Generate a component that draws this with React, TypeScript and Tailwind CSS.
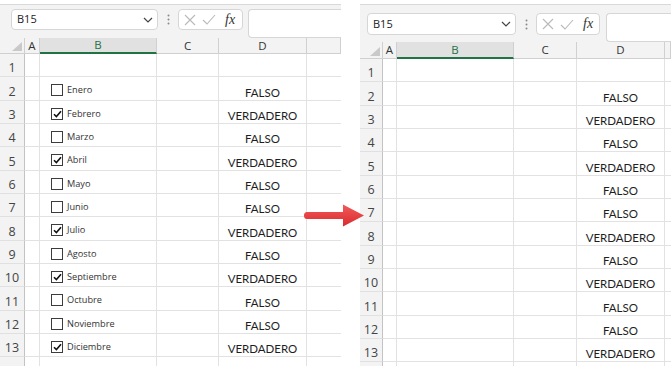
import React from "react";

type Cfg = {
  width: string;
  bar: string;
  nameBox: string;
  dots: string;
  fxBox: string;
  cols: string;
  head: string;
  checks: boolean;
};

const LEFT: Cfg = {
  width: "w-[341px]",
  bar: "h-[34px] pt-[4px] pl-[11px]",
  nameBox: "w-[147px] h-[21px]",
  dots: "w-[20px] h-[21px]",
  fxBox: "w-[65px] h-[21px] mr-[5px]",
  cols: "grid-cols-[25px_15px_117px_62px_88px_1fr]",
  head: "h-[16px]",
  checks: true,
};

const RIGHT: Cfg = {
  width: "w-[311px]",
  bar: "h-[38px] pt-[8px] pl-[7px]",
  nameBox: "w-[149px] h-[22px]",
  dots: "w-[20px] h-[22px]",
  fxBox: "w-[64px] h-[22px] mr-[6px]",
  cols: "grid-cols-[23px_14px_117px_63px_88px_1fr]",
  head: "h-[17px]",
  checks: false,
};

// month, checked
const months: [string, boolean][] = [
  ["Enero", false],
  ["Febrero", true],
  ["Marzo", false],
  ["Abril", true],
  ["Mayo", false],
  ["Junio", false],
  ["Julio", true],
  ["Agosto", false],
  ["Septiembre", true],
  ["Octubre", false],
  ["Noviembre", false],
  ["Diciembre", true],
];

const CheckBox = ({ checked }: { checked: boolean }) => (
  <span className="flex h-[12px] w-[12px] shrink-0 items-center justify-center border border-[#3c3c3c] bg-white">
    {checked && (
      <svg width="9" height="8" viewBox="0 0 9 8">
        <path d="M1 4.2 L3.4 6.6 L8 1.2" fill="none" stroke="#111" strokeWidth="1.6" />
      </svg>
    )}
  </span>
);

const Toolbar = ({ cfg }: { cfg: Cfg }) => (
  <div className={`flex shrink-0 items-start border-t border-[#d9d9d9] bg-[#f3f3f3] ${cfg.bar}`}>
    <div
      className={`flex items-center justify-between rounded-[4px] border border-[#d6d6d6] bg-white pl-[5px] pr-[4px] ${cfg.nameBox}`}
    >
      <span className="font-['Open_Sans',sans-serif] text-[11px] text-[#222]">B15</span>
      <svg width="10" height="6" viewBox="0 0 10 6">
        <path d="M1 1 L5 5 L9 1" fill="none" stroke="#444" strokeWidth="1.2" />
      </svg>
    </div>
    <div className={`flex items-center justify-center ${cfg.dots}`}>
      <svg width="3" height="11" viewBox="0 0 3 11">
        <circle cx="1.5" cy="1.5" r="1" fill="#8a8a8a" />
        <circle cx="1.5" cy="5.5" r="1" fill="#8a8a8a" />
        <circle cx="1.5" cy="9.5" r="1" fill="#8a8a8a" />
      </svg>
    </div>
    <div
      className={`flex items-center gap-[6px] rounded-[4px] border border-[#d6d6d6] bg-white pl-[5px] ${cfg.fxBox}`}
    >
      <svg width="12" height="12" viewBox="0 0 12 12">
        <path d="M1 1 L11 11 M11 1 L1 11" stroke="#b9b9b9" strokeWidth="1.1" />
      </svg>
      <svg width="14" height="11" viewBox="0 0 14 11">
        <path d="M1 6 L5 10 L13 1" fill="none" stroke="#b9b9b9" strokeWidth="1.1" />
      </svg>
      <span className="ml-[3px] font-['Liberation_Serif',serif] text-[14px] italic leading-none text-[#333]">
        fx
      </span>
    </div>
    <div className="h-full flex-1 rounded-l-[4px] border border-r-0 border-[#d6d6d6] bg-white" />
  </div>
);

const Panel = ({ cfg }: { cfg: Cfg }) => {
  const letters = ["A", "B", "C", "D", ""];
  const rows = Array.from({ length: 14 }, (_, i) => i + 1);
  return (
    <div className={`flex h-[366px] shrink-0 flex-col overflow-hidden pt-[4px] ${cfg.width}`}>
      <Toolbar cfg={cfg} />
      <div className={`grid shrink-0 ${cfg.cols} font-['Open_Sans',sans-serif]`}>
        {/* header row */}
        <div className={`relative border-r border-b border-[#d0d0d0] bg-[#f3f3f3] ${cfg.head}`}>
          <svg className="absolute right-[2px] bottom-[2px]" width="10" height="9" viewBox="0 0 10 9">
            <path d="M10 0 L10 9 L0 9 Z" fill="#c9c9c9" />
          </svg>
        </div>
        {letters.map((l) => (
          <div
            key={l || "e"}
            className={`flex items-center justify-center text-[11.5px] leading-none ${cfg.head} ${
              l === "B"
                ? "border-r border-b-2 border-r-[#d0d0d0] border-b-[#217346] bg-[#e1e1e1] text-[#217346]"
                : "border-r border-b border-[#d0d0d0] bg-[#f3f3f3] text-[#333]"
            }`}
          >
            {l}
          </div>
        ))}
        {rows.map((r) => {
          const m = r >= 2 && r <= 13 ? months[r - 2] : null;
          return (
            <React.Fragment key={r}>
              <div className="flex h-[23.33px] items-end justify-center border-r border-b border-r-[#c3c3c3] border-b-[#e0e0e0] bg-[#f3f3f3] text-[12.5px] leading-[16px] text-[#444]">
                {r <= 13 ? r : ""}
              </div>
              <div className="border-r border-b border-[#e2e2e2]" />
              <div className="flex items-start gap-[4px] border-r border-b border-[#e2e2e2] pt-[7px] pl-[11px]">
                {cfg.checks && m && (
                  <>
                    <CheckBox checked={m[1]} />
                    <span className="font-['Open_Sans',sans-serif] text-[9.2px] leading-[11px] text-[#333]">
                      {m[0]}
                    </span>
                  </>
                )}
              </div>
              <div className="border-r border-b border-[#e2e2e2]" />
              <div className="flex items-end justify-center border-r border-b border-[#e2e2e2] font-['Lato',sans-serif] text-[11.5px] leading-[15px] text-[#1e1e1e]">
                {m ? (m[1] ? "VERDADERO" : "FALSO") : ""}
              </div>
              <div className="border-b border-[#e2e2e2]" />
            </React.Fragment>
          );
        })}
      </div>
    </div>
  );
};

const Arrow = () => (
  <svg className="absolute top-[203px] left-[303px]" width="63" height="25" viewBox="0 0 63 25">
    <defs>
      <linearGradient id="ag" x1="0" y1="0" x2="0" y2="1">
        <stop offset="0" stopColor="#f25a5a" />
        <stop offset="1" stopColor="#d92b2e" />
      </linearGradient>
    </defs>
    <path
      d="M4 9 L40 9 L40 1.5 L61 12.5 L40 23.5 L40 16 L4 16 Q1 16 1 12.5 Q1 9 4 9 Z"
      fill="url(#ag)"
    />
  </svg>
);

const App = () => {
  return (
    <div className="relative flex h-[366px] w-[671px] overflow-hidden bg-white">
      <Panel cfg={LEFT} />
      <div className="w-[19px] shrink-0" />
      <Panel cfg={RIGHT} />
      <Arrow />
    </div>
  );
};

export default App;
